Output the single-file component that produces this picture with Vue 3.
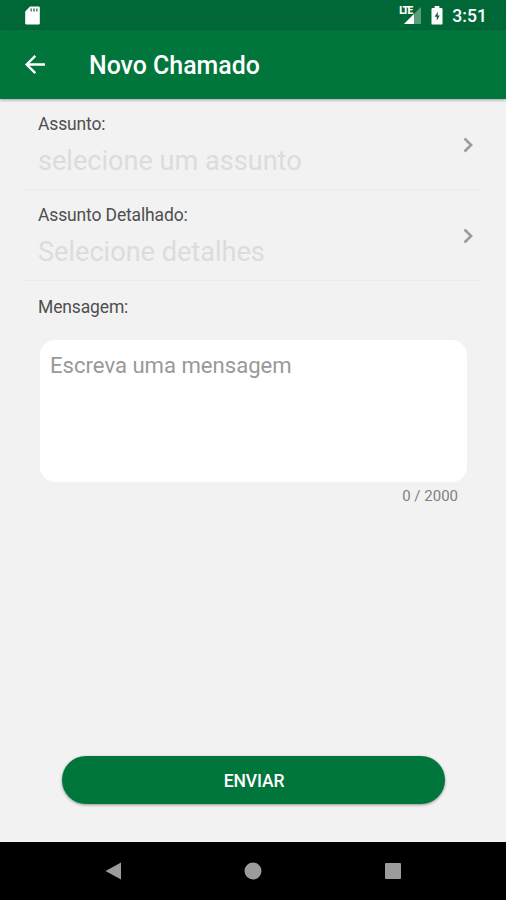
<template>
  <div class="screen">
    <div class="status-bar">
      <svg class="status-bar__sd" width="15" height="19" viewBox="0 0 15 19">
        <path d="M5 0.500h8.500a1.300 1.300 0 0 1 1.300 1.300v15.400a1.300 1.300 0 0 1-1.300 1.300h-12a1.300 1.300 0 0 1-1.300-1.300V5.500z" fill="#fff" />
        <path d="M6.200 2.500v3M9 2.500v3M11.800 2.500v3" stroke="#4c9471" stroke-width="1.700" />
      </svg>
      <div class="status-bar__signal">
        <span class="status-bar__lte">LTE</span>
        <svg width="17" height="17" viewBox="0 0 17 17">
          <path d="M0 17L17 0v17z" fill="#5b9d7b" />
          <path d="M0 17L10 7v10z" fill="#fff" />
        </svg>
      </div>
      <svg class="status-bar__battery" width="12" height="19" viewBox="0 0 12 20">
        <path d="M3.500 0h5v2H10.500a1.300 1.300 0 0 1 1.300 1.300v15a1.300 1.300 0 0 1-1.300 1.300h-9a1.300 1.300 0 0 1-1.300-1.300v-15A1.300 1.300 0 0 1 1.500 2h2z" fill="#fff" />
        <path d="M6.800 6L3.500 11.200h2.300V15.500L8.800 10H6.800z" fill="#006837" />
      </svg>
      <span class="status-bar__time">3:51</span>
    </div>

    <header class="toolbar">
      <button class="toolbar__back" aria-label="Voltar">
        <svg width="22" height="20" viewBox="0 0 22 20" fill="none" stroke="#fff" stroke-width="2.400">
          <path d="M21 9.500H3M11.300 0.900L2.700 9.500L11.300 18.100" />
        </svg>
      </button>
      <h1 class="toolbar__title">Novo Chamado</h1>
    </header>

    <main class="form">
      <div v-for="field in fields" :key="field.label" class="select-row">
        <div class="select-row__text">
          <span class="label">{{ field.label }}</span>
          <span class="select-row__value">{{ field.placeholder }}</span>
        </div>
        <svg class="select-row__chevron" width="10" height="16" viewBox="0 0 10 16" fill="none" stroke="#9c9c9c" stroke-width="2.600">
          <path d="M1.500 1.500L8.100 8L1.500 14.500" />
        </svg>
      </div>

      <div class="message">
        <label class="label" for="message">Mensagem:</label>
        <textarea
          id="message"
          v-model="message"
          class="message__textarea"
          placeholder="Escreva uma mensagem"
          :maxlength="maxLength"
        ></textarea>
        <span class="message__counter">{{ message.length }} / {{ maxLength }}</span>
      </div>

      <button class="submit">ENVIAR</button>
    </main>

    <nav class="nav-bar">
      <svg width="18" height="20" viewBox="0 0 18 20"><path d="M1.500 10L17 1.500v17z" fill="#9c9c9c" /></svg>
      <svg width="18" height="18" viewBox="0 0 18 18"><circle cx="9" cy="9" r="8.500" fill="#9c9c9c" /></svg>
      <svg width="18" height="18" viewBox="0 0 18 18"><rect x="1" y="1" width="16" height="16" rx="1" fill="#9c9c9c" /></svg>
    </nav>
  </div>
</template>

<script setup>
import { ref } from 'vue'

const maxLength = 2000

const fields = [
  { label: 'Assunto:', placeholder: 'selecione um assunto' },
  { label: 'Assunto Detalhado:', placeholder: 'Selecione detalhes' }
]

const message = ref('')
</script>

<style>
body {
  background: #f2f2f2;
}
</style>

<style scoped>
.screen {
  display: flex;
  flex-direction: column;
  height: 900px;
  overflow: hidden;
  background: #f2f2f2;
  font-family: Roboto, sans-serif;
}

.screen * {
  box-sizing: border-box;
}

.status-bar {
  display: flex;
  align-items: center;
  flex: none;
  height: 30px;
  padding: 0 19px 0 25px;
  background: #006837;
  color: #fff;
}

.status-bar__signal {
  position: relative;
  display: flex;
  width: 22px;
  height: 18px;
  margin-left: auto;
  align-items: flex-end;
  justify-content: flex-end;
}

.status-bar__lte {
  position: absolute;
  top: 1px;
  left: 0;
  font-size: 10px;
  font-weight: 900;
  line-height: 8px;
  letter-spacing: -1.3px;
}

.status-bar__battery {
  margin: 0 9px 0 10px;
}

.status-bar__time {
  font-size: 17.6px;
  font-weight: 500;
  line-height: 22px;
  padding-top: 1px;
}

.toolbar {
  display: flex;
  align-items: center;
  flex: none;
  height: 69px;
  padding-left: 24px;
  background: #00753c;
  box-shadow: 0 1px 3px rgba(0, 0, 0, 0.35);
}

.toolbar__back {
  display: flex;
  padding: 0;
  border: 0;
  background: none;
}

.toolbar__title {
  margin: 3px 0 0 43px;
  color: #fff;
  font-size: 24.9px;
  font-weight: 500;
  line-height: 32px;
}

.form {
  display: flex;
  flex: 1;
  flex-direction: column;
  padding: 0 25px;
}

.label {
  color: #4f4f4f;
  font-size: 17.5px;
  line-height: 22px;
  letter-spacing: -0.14px;
}

.select-row {
  display: flex;
  align-items: center;
  height: 91px;
  padding: 0 8px 0 13px;
  border-bottom: 1px solid #ebebeb;
}

.select-row__text {
  display: flex;
  flex: 1;
  flex-direction: column;
  padding-top: 2px;
}

.select-row__value {
  margin-top: 10px;
  color: #dcdcdc;
  font-size: 27.1px;
  line-height: 32px;
}

.select-row__chevron {
  margin-top: 1px;
}

.message {
  display: flex;
  flex-direction: column;
  padding: 15px 13px 0;
}

.message__textarea {
  height: 142px;
  margin: 22px 1px 0 2px;
  padding: 11px 10px;
  border: 0;
  border-radius: 15px;
  outline: none;
  background: #fff;
  color: #4a4a4a;
  font-family: inherit;
  font-size: 22.1px;
  line-height: 28px;
  resize: none;
}

.message__textarea::placeholder {
  color: #999;
}

.message__counter {
  margin: 4px 10px 0 0;
  color: #808080;
  font-size: 15px;
  line-height: 20px;
  text-align: right;
}

.submit {
  height: 48px;
  margin: auto 36px 38px 37px;
  padding: 2px 0 0 1px;
  border: 0;
  border-radius: 24px;
  background: #00753c;
  box-shadow: 0 1px 3px rgba(0, 0, 0, 0.4);
  color: #fff;
  font-family: inherit;
  font-size: 17.5px;
  font-weight: 500;
  letter-spacing: -0.1px;
}

.nav-bar {
  display: flex;
  align-items: center;
  justify-content: space-between;
  flex: none;
  height: 58px;
  padding: 0 104px;
  background: #000;
}
</style>
